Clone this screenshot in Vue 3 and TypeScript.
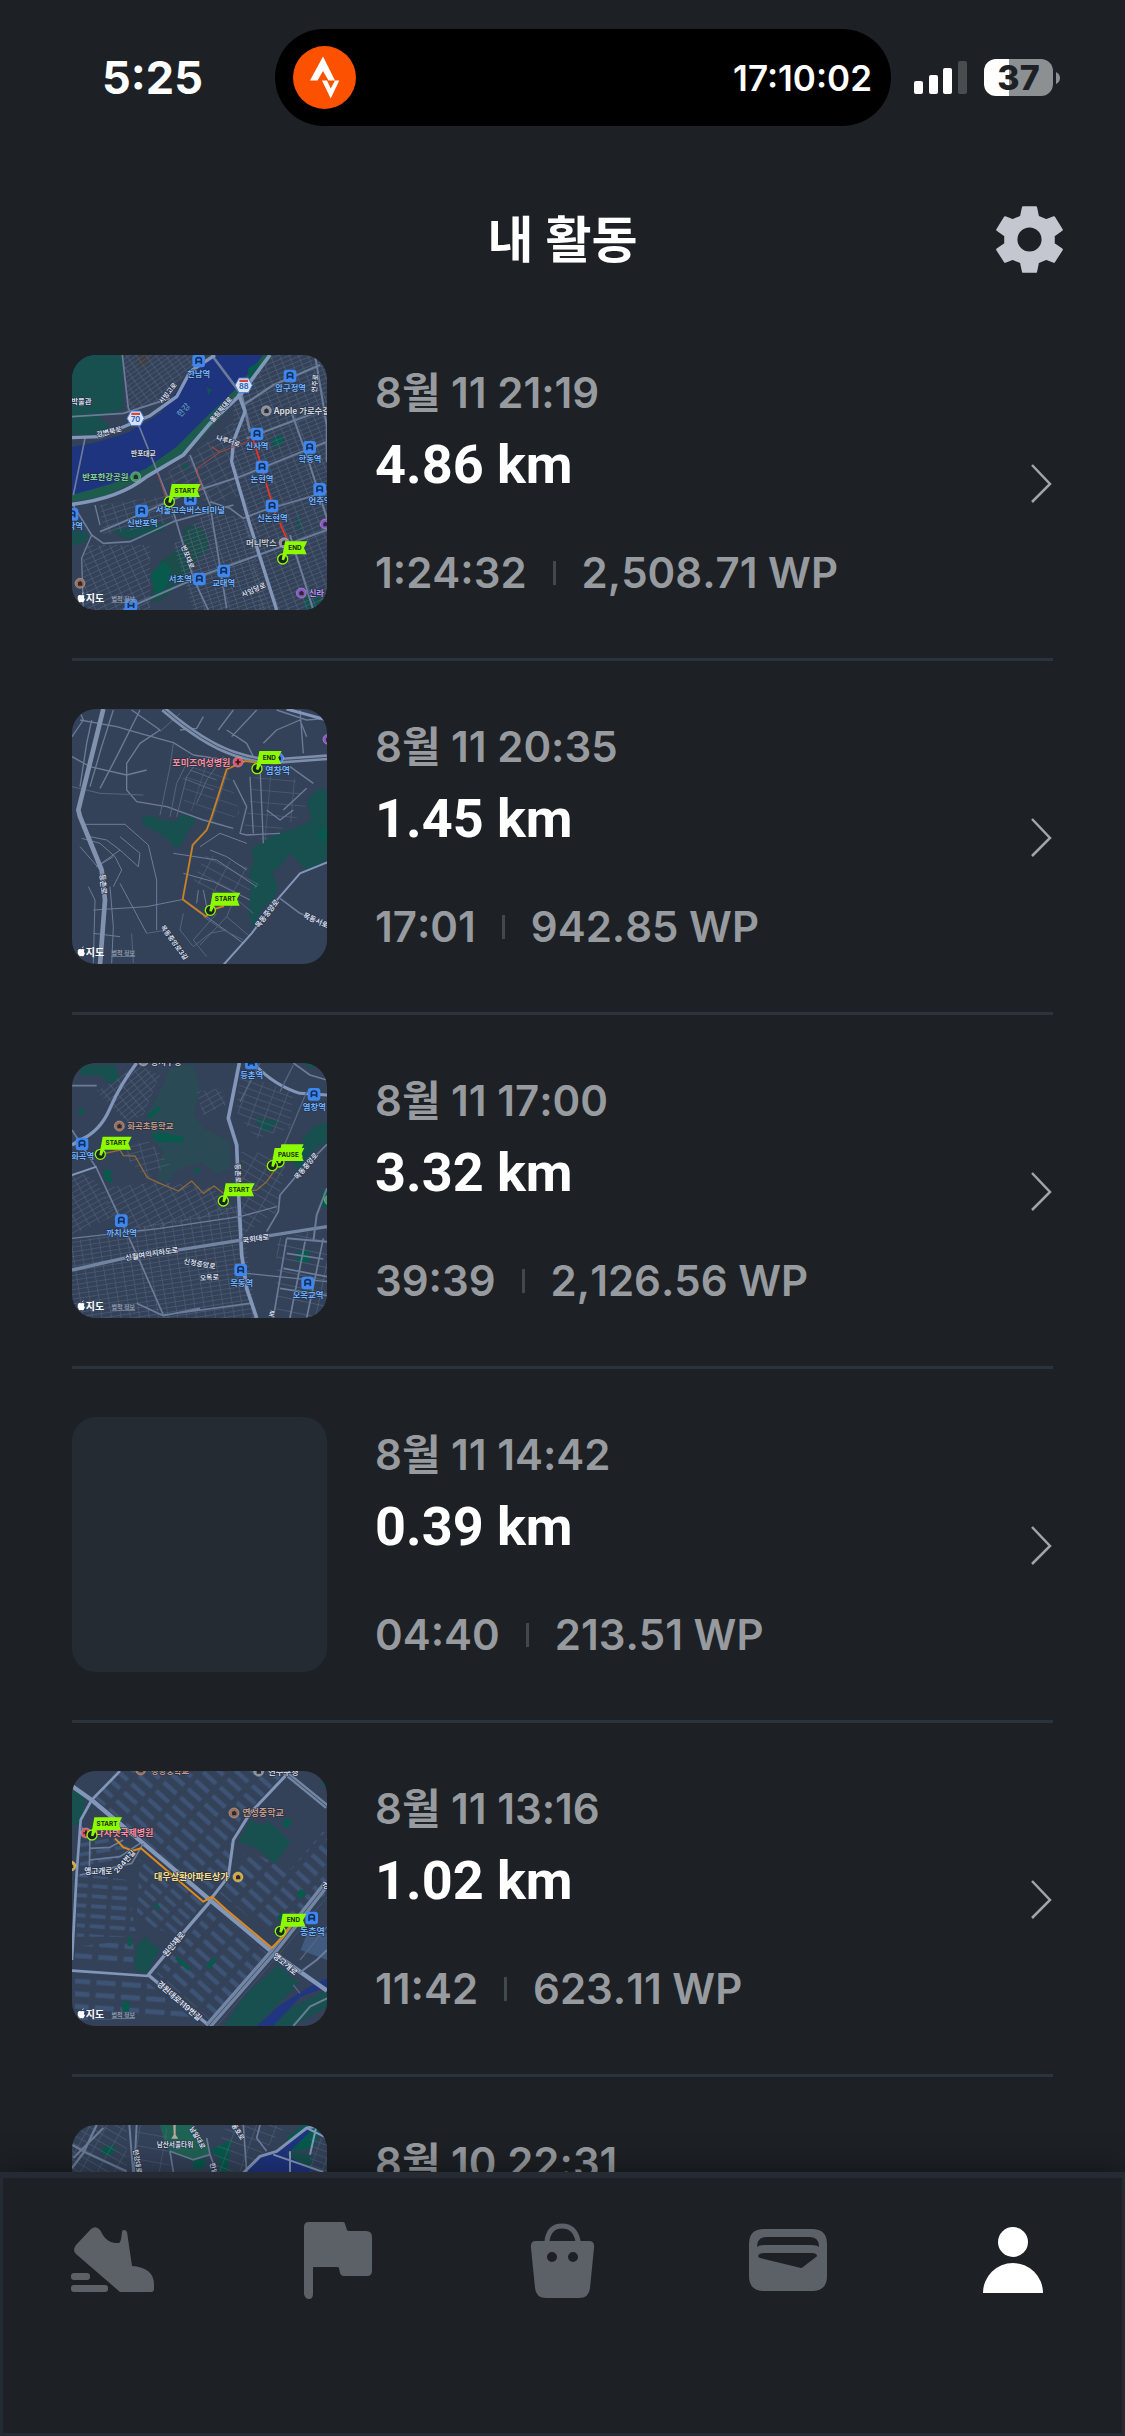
<script setup lang="ts">
type Road = [d: string, width: number, color?: string]
type Label = { x: number; y: number; t: string; c?: string; s?: number; r?: number }
type Hatch = { d: string; a: number; step: number; o?: number; block?: boolean }
type Poi = { x: number; y: number; k: 'metro' | 'blue' | 'brown' | 'gray' | 'red' | 'gold' | 'green' | 'purple' }
type Flag = { x: number; y: number; t: string; w: number }

interface MapArt {
  top: number
  areas: [d: string, fill: string][]
  hatches: Hatch[]
  roads: Road[]
  routes: Road[]
  pois: Poi[]
  shields: { x: number; y: number; t: string }[]
  labels: Label[]
  flags: Flag[]
}

interface Activity {
  date: string
  distance?: string
  duration?: string
  points?: string
  map?: MapArt
}

const PARK = '#17504f'
const PARK2 = '#075a4c'
const RIVER = '#1f347f'
const BLUE = '#6eb1ff'
const MAIN = '#8296b9'
const ROAD = '#6b7c98'
const THIN = '#54657f'
const ROSE = '#ff8d9b'
const CLAY = '#c79a86'

const seochoMap: MapArt = {
  top: 30,
  areas: [
    ['M36 30H187L190 190 150 210 36 208Z', PARK],
    ['M225 30H270L265 55 240 68Z', '#3d3d44'],
    ['M36 305 110 292 205 262 300 205 370 110 430 62 455 30H610L520 140 450 210 350 320 270 370 160 420 36 455Z', RIVER],
    ['M610 30H640L560 130 470 230 370 335 250 400 130 455 36 470V450L160 415 260 370 350 305 440 215 530 130Z', '#1d5b4d'],
    ['M36 200 110 210 150 245 130 270 36 268Z', PARK],
    ['M370 555Q410 525 440 570 455 620 425 628L375 700 340 735 300 770H270L285 700 300 650 335 625 370 610Z', '#1c4d4a'],
    ['M270 690 310 650 335 670 318 730 290 750Z', PARK2],
    ['M36 555 80 560 90 585 50 600H36Z', PARK],
    ['M635 285 665 268 673 290 645 308Z', PARK2],
    ['M710 515 722 507 724 560 712 550Z', PARK],
    ['M730 740 760 730 800 760V795H735Z', PARK],
    ['M155 555 240 545 330 530 300 560 200 585Z', PARK],
    ['M565 70 600 48 590 90 565 98ZM440 125 455 135 445 150ZM365 365 380 355 382 375Z', PARK2],
  ],
  hatches: [
    { d: 'M190 30H430L300 170 200 200Z', a: -35, step: 12 },
    { d: 'M520 180 640 30H801V795H600L520 340Z', a: -22, step: 13 },
    { d: 'M300 400 520 230 540 450 460 480Z', a: -28, step: 18 },
    { d: 'M120 480 330 450 350 530 130 570Z', a: -18, step: 16 },
    { d: 'M440 500 560 520 620 795H400L340 600Z', a: -18, step: 12 },
    { d: 'M70 600 270 600 270 795H70Z', a: -25, step: 15 },
  ],
  roads: [
    ['M187 30 205 190 240 250 300 400 340 500 400 700 445 795', 5, ROAD],
    ['M75 280 40 450M36 475 95 570 130 595 210 590 340 530 520 480', 5, ROAD],
    ['M36 215 190 205 330 160', 5, ROAD],
    ['M455 30 545 150 570 260', 8, ROAD],
    ['M390 330 450 480 500 790', 5, ROAD],
    ['M120 560 180 535 370 450 540 395 801 290', 6, ROAD],
    ['M450 470 510 490 550 520 600 500 801 440', 5, ROAD],
    ['M190 795 430 690 801 555', 6, ROAD],
    ['M550 180 640 120 780 60', 7, ROAD],
    ['M560 280 801 190', 6, ROAD],
    ['M690 190 740 330 801 520M690 570 760 795', 6, ROAD],
    ['M95 570 65 640 70 795M105 480 120 540', 4, ROAD],
    ['M36 278 120 275 270 212 350 155 390 80 465 30', 10],
    ['M36 478Q180 460 260 395L370 330 450 235 545 145 630 30', 11],
    ['M535 145 555 200 520 290 515 350 570 540 620 700 650 795', 10],
    ['M765 30 800 240V350', 6, ROAD],
  ],
  routes: [
    ['M295 390 318 460 425 432 410 370 480 322 455 305 480 322 560 290 578 268', 3, '#a9463f'],
    ['M578 280 600 350 640 490 682 585', 5, '#f8301c'],
  ],
  pois: [
    { x: 416, y: 48, k: 'metro' }, { x: 690, y: 93, k: 'metro' }, { x: 591, y: 267, k: 'metro' },
    { x: 749, y: 307, k: 'metro' }, { x: 606, y: 366, k: 'metro' }, { x: 779, y: 433, k: 'metro' },
    { x: 636, y: 483, k: 'metro' }, { x: 245, y: 498, k: 'metro' }, { x: 391, y: 462, k: 'metro' },
    { x: 36, y: 508, k: 'metro' }, { x: 418, y: 702, k: 'metro' }, { x: 491, y: 678, k: 'metro' },
    { x: 213, y: 780, k: 'metro' }, { x: 619, y: 197, k: 'gray' }, { x: 227, y: 395, k: 'green' },
    { x: 672, y: 593, k: 'gray' }, { x: 60, y: 715, k: 'brown' }, { x: 724, y: 744, k: 'purple' },
    { x: 796, y: 537, k: 'purple' },
  ],
  shields: [{ x: 227, y: 220, t: '70' }, { x: 551, y: 121, t: '88' }],
  labels: [
    { x: 416, y: 86, t: '한남역', c: BLUE }, { x: 692, y: 130, t: '압구정역', c: BLUE },
    { x: 591, y: 303, t: '신사역', c: BLUE }, { x: 750, y: 343, t: '학동역', c: BLUE },
    { x: 606, y: 402, t: '논현역', c: BLUE }, { x: 780, y: 468, t: '언주역', c: BLUE },
    { x: 637, y: 519, t: '신논현역', c: BLUE }, { x: 247, y: 534, t: '신반포역', c: BLUE },
    { x: 391, y: 496, t: '서울고속버스터미널', c: BLUE }, { x: 46, y: 543, t: '작역', c: BLUE },
    { x: 361, y: 703, t: '서초역', c: BLUE }, { x: 491, y: 713, t: '교대역', c: BLUE },
    { x: 370, y: 195, t: '한강', c: '#4c8be0', r: -50 }, { x: 725, y: 198, t: 'Apple 가로수길', c: '#d4d6dc' },
    { x: 136, y: 395, t: '반포한강공원', c: '#7fd0a0' }, { x: 250, y: 324, t: '반포대교', s: 20 },
    { x: 64, y: 167, t: '박물관', s: 22 }, { x: 604, y: 594, t: '머니박스', c: '#c9ccd4' },
    { x: 769, y: 744, t: '신라', c: '#c78df0' }, { x: 147, y: 259, t: '강변북로', r: -14, s: 21 },
    { x: 322, y: 143, t: '서빙고로', r: -52, s: 20 }, { x: 482, y: 192, t: '올림픽대로', r: -50, s: 20 },
    { x: 505, y: 286, t: '나루터로', r: 18, s: 20 }, { x: 385, y: 635, t: '반포대로', r: 68, s: 20 },
    { x: 580, y: 733, t: '사임당로', r: -24, s: 21 }, { x: 763, y: 115, t: '언주로', r: -85, s: 20 },
  ],
  flags: [{ x: 328, y: 470, t: 'START', w: 92 }, { x: 668, y: 642, t: 'END', w: 72 }],
}

const yeomchangMap: MapArt = {
  top: 27,
  areas: [
    ['M245 352 262 345 310 360 340 365 370 343 400 350 408 365 385 390 362 438 345 443 320 415 280 390 250 375Z', PARK],
    ['M780 262 801 275V480L770 500 735 508 710 480 690 460 670 490 635 520 655 560 640 600 610 620 580 682 565 640 572 580 570 510 580 490 575 445 650 400 700 388 755 360 740 300Z', PARK],
    ['M770 405 801 375V430Z', PARK2],
  ],
  hatches: [
    { d: 'M440 460 560 500 600 560 470 600 400 540Z', a: 28, step: 26, o: 0.8 },
    { d: 'M380 180 500 200 540 340 480 380 370 320Z', a: 18, step: 34, o: 0.7 },
    { d: 'M590 190 690 200 740 330 620 420 550 400Z', a: 5, step: 36, o: 0.8 },
  ],
  roads: [
    ['M55 25 70 60 36 110M60 60 170 80 240 100 340 128 400 165 500 180M95 60 80 130 60 260', 4, ROAD],
    ['M160 30 125 140 90 260M240 30 170 170 120 265M36 170 90 200 200 225 260 210M215 30 300 90 240 130 200 190 200 270 230 305 320 320 430 360 520 385', 4, ROAD],
    ['M36 260 120 280 250 285M300 95 360 40M340 130 330 200 300 345M390 170 350 250 330 350M415 180 380 230 350 350M390 210 470 240M370 235 460 270M410 310 440 240 490 170', 3, THIN],
    ['M475 90 520 30M430 50 410 85 360 90M500 90 560 130 590 190M515 110 590 30M610 130 650 90 720 60 740 110M720 30 730 160M650 30 740 60 801 55M570 230 580 400M600 200 610 430M520 240 560 320 540 400 560 405 660 400M620 330 660 360 700 330M690 200 760 250M670 330 740 265', 4, ROAD],
    ['M75 373H195L265 435 290 540V690M65 415 120 430 165 470 185 510 160 560M90 410 140 420 180 450 235 500 240 460 180 410M60 440 130 520M180 450 110 500 160 470', 3, ROAD],
    ['M100 630 260 620 370 598 440 650 550 730M85 560 105 600 100 790M150 560 160 680 155 790M180 550 260 700M100 700 180 710M340 460 470 480 590 560M370 520 460 545 570 600M415 570 410 610M430 570 440 620M420 440 480 400 560 430M450 450 500 470 560 510', 3, ROAD],
    ['M370 640 360 690 400 740 450 700 500 690M470 640 400 720 440 770M500 650 420 735M520 590 580 640M215 700 220 790M260 700 320 690M530 580 500 650 570 710M430 650 490 690 550 720', 3, THIN],
    ['M801 487 720 520 655 595 575 700 490 795', 6],
    ['M660 595 720 640 801 675', 5, ROAD],
    ['M130 27 55 330 60 350 125 510 135 600 120 795', 14, '#8092ad'],
    ['M310 27Q430 130 520 160T660 182L801 172', 18, '#7c8eaa'],
    ['M310 27Q430 130 520 160T660 182L801 172', 3, '#3f4f68'],
    ['M680 27 801 60', 9],
  ],
  routes: [
    ['M590 188 555 183 500 208 455 350 440 390 398 435 368 598 438 650 455 630 492 618', 6, '#a9772c'],
    ['M590 188 555 183 500 208 455 350 440 390 398 435 368 598 438 650 455 630 492 618', 2, '#e58a2a'],
  ],
  pois: [{ x: 534, y: 186, k: 'red' }, { x: 656, y: 174, k: 'blue' }, { x: 804, y: 118, k: 'purple' }],
  shields: [],
  labels: [
    { x: 424, y: 188, t: '포미즈여성병원', c: ROSE, s: 27 }, { x: 653, y: 213, t: '염창역', c: BLUE, s: 27 },
    { x: 131, y: 552, t: '등촌로', r: 84, s: 22 }, { x: 620, y: 640, t: '목동중앙로', r: -52, s: 22 },
    { x: 768, y: 660, t: '목동서로', r: 24, s: 22 }, { x: 344, y: 726, t: '목동중앙로3길', r: 54, s: 20 },
  ],
  flags: [{ x: 591, y: 206, t: 'END', w: 72 }, { x: 451, y: 631, t: 'START', w: 88 }],
}

const hwagokMap: MapArt = {
  top: 24,
  areas: [
    ['M330 40 400 27 420 100 400 180 430 220 510 260 512 340 470 355 420 320 350 345 320 385 290 370 310 290 280 250 260 180 300 110Z', '#2a4b56'],
    ['M60 30H165L180 75 150 85 120 62 60 60Z', PARK],
    ['M258 185 296 152 300 168 270 190ZM272 240 300 232 372 245 368 262 290 260Z', PARK2],
    ['M585 190 655 196 640 215 622 235 600 218Z', PARK],
    ['M801 200V262L770 280 740 310 715 350 700 330 735 240 760 215Z', PARK],
    ['M712 588 748 586V622H712ZM400 347 412 337 420 347 410 357ZM132 345H154V388L132 370ZM58 158 74 164 66 180 56 172ZM730 24 760 28 758 40Z', PARK2],
    ['M785 408H801V455H785Z', PARK2],
  ],
  hatches: [
    { d: 'M110 110 230 30 300 60 250 180 200 200Z', a: -40, step: 14 },
    { d: 'M410 110 480 100 500 150 430 180Z', a: -30, step: 16 },
    { d: 'M540 60 700 110 690 220 590 250 530 170Z', a: 20, step: 20 },
    { d: 'M36 560 540 450 590 790H36Z', a: -9, step: 14 },
    { d: 'M120 400 300 380 460 400 530 470 180 540Z', a: -28, step: 17 },
    { d: 'M545 290 680 300 650 470 545 540Z', a: 30, step: 22 },
    { d: 'M36 340 110 380 170 480 36 540Z', a: -30, step: 15 },
    { d: 'M650 550 801 520V789H650Z', a: 12, step: 38, o: 0.9 },
    { d: 'M160 270 270 260 330 330 260 370 200 310Z', a: -15, step: 20 },
  ],
  roads: [
    ['M36 92H110M36 225 110 340 175 480 240 620 310 780', 5, ROAD],
    ['M230 24Q180 90 150 160T60 255L36 270', 10],
    ['M36 360 110 335', 6],
    ['M310 780 570 745M230 745 310 782 420 760', 5, ROAD],
    ['M538 24 505 190 530 270 535 400 545 600 560 700 590 789', 11],
    ['M580 24Q640 90 720 115L801 120', 9],
    ['M700 24 750 60 801 75', 5, ROAD],
    ['M36 550 300 520 540 485 650 455M560 655 801 680', 4, ROAD],
    ['M36 645 190 610 400 578 590 548 801 515', 10, '#7184a1'],
    ['M801 268 720 350 660 420 655 470 620 530', 5, ROAD],
    ['M680 550 640 789M735 560 690 789M790 550 740 789M670 640 801 665M660 700 801 722M680 595 790 612', 5, ROAD],
    ['M801 400 770 480 760 560M680 550 801 560', 6, ROAD],
    ['M600 24 540 140M660 110 700 30M740 110 690 230 660 300', 4, THIN],
  ],
  routes: [['M122 298 180 285 190 302 225 303 262 368 300 385 355 408 395 378 430 415 462 393 490 415 590 405 620 380 655 330', 4, '#8f6a35']],
  pois: [
    { x: 574, y: 24, k: 'metro' }, { x: 762, y: 118, k: 'metro' }, { x: 66, y: 267, k: 'metro' },
    { x: 184, y: 497, k: 'metro' }, { x: 542, y: 645, k: 'metro' }, { x: 743, y: 684, k: 'metro' },
    { x: 178, y: 213, k: 'brown' }, { x: 250, y: 18, k: 'gray' }, { x: 808, y: 435, k: 'green' },
  ],
  shields: [],
  labels: [
    { x: 575, y: 60, t: '등촌역', c: BLUE }, { x: 763, y: 155, t: '염창역', c: BLUE },
    { x: 68, y: 304, t: '화곡역', c: BLUE }, { x: 185, y: 533, t: '까치산역', c: BLUE },
    { x: 545, y: 683, t: '목동역', c: BLUE }, { x: 744, y: 720, t: '오목교역', c: BLUE },
    { x: 271, y: 214, t: '화곡초등학교', c: CLAY }, { x: 318, y: 22, t: '등서구청', c: '#c9ccd4' },
    { x: 535, y: 355, t: '등촌로', r: 88, s: 21 }, { x: 737, y: 332, t: '목동중앙로', r: -50, s: 21 },
    { x: 275, y: 595, t: '신월여의지하도로', r: -9, s: 22 }, { x: 587, y: 550, t: '국회대로', r: -8, s: 22 },
    { x: 419, y: 625, t: '신정중앙로', r: 10, s: 21 }, { x: 448, y: 666, t: '오목로', r: -4, s: 21 },
    { x: 636, y: 775, t: '로', r: 10, s: 21 },
  ],
  flags: [
    { x: 121, y: 298, t: 'START', w: 92 }, { x: 490, y: 438, t: 'START', w: 92 },
    { x: 657, y: 321, t: '', w: 72 }, { x: 637, y: 332, t: 'PAUSE', w: 94 },
  ],
}

const dongchunMap: MapArt = {
  top: 33,
  areas: [
    ['M36 90 75 110 72 160 55 195H36Z', PARK],
    ['M745 510 801 520V600L722 570Z', '#405a80'],
  ],
  hatches: [
    { d: 'M190 33H680L540 180 500 350 440 400 250 240 100 110Z', a: 42, step: 34, block: true },
    { d: 'M560 270 690 330 801 200V400L650 540 480 400Z', a: 42, step: 34, block: true },
    { d: 'M240 290 440 430 350 530 230 480Z', a: 42, step: 28, block: true },
    { d: 'M50 340 200 360 230 530 50 530Z', a: 4, step: 30, block: true },
    { d: 'M45 560 220 540 220 620 45 615ZM45 655 260 665 400 780H45Z', a: 4, step: 38, block: true },
    { d: 'M460 440 620 580 450 780 290 640Z', a: 42, step: 34, block: true },
    { d: 'M60 200 170 240 220 270 150 310 60 320Z', a: -10, step: 28, block: true },
  ],
  roads: [
    ['M570 180 605 195 625 182 692 245 645 312 590 265 535 245Z', 0],
    ['M95 120 180 33M95 120 62 180 50 340 36 600', 8],
    ['M36 78 95 120 250 250 450 420 635 575 801 692', 13],
    ['M450 425 360 530 265 645 445 795', 10],
    ['M36 632 265 648', 8],
    ['M450 420 505 350 520 240 570 160 690 33', 9],
    ['M670 33 801 140', 16, '#7285a2'],
    ['M670 33 801 140', 3, '#3f4f68'],
    ['M445 798 640 575 801 370', 22, '#7285a2'],
    ['M445 798 640 575 801 370M470 798 660 580 801 410', 3, '#42526c'],
    ['M716 640 770 600 801 570M700 798 750 740 801 715', 6, ROAD],
    ['M62 200 90 230 88 330M90 265 150 262 190 240M88 300 180 290 240 250M250 250 215 310 60 345', 5, ROAD],
    ['M801 500 720 600M700 675 720 700', 4, THIN],
  ],
  routes: [['M165 235 190 262 218 272 243 265 430 425 456 410 500 450 635 563 670 530 690 500', 6, '#dd8a1c']],
  pois: [
    { x: 242, y: 30, k: 'brown' }, { x: 596, y: 34, k: 'gray' }, { x: 522, y: 159, k: 'brown' },
    { x: 78, y: 219, k: 'red' }, { x: 534, y: 351, k: 'gold' }, { x: 33, y: 318, k: 'gold' },
    { x: 755, y: 474, k: 'metro' },
  ],
  shields: [],
  labels: [
    { x: 330, y: 33, t: '청량중학교', c: CLAY }, { x: 670, y: 37, t: '연수구청', c: '#c9ccd4' },
    { x: 609, y: 160, t: '연성중학교', c: CLAY, s: 27 }, { x: 193, y: 220, t: '나사렛국제병원', c: ROSE, s: 27 },
    { x: 394, y: 352, t: '대우삼환아파트상가', c: '#ffe08a', s: 27 }, { x: 757, y: 516, t: '동춘역', c: BLUE, s: 27 },
    { x: 115, y: 334, t: '앵고개로', s: 23 }, { x: 193, y: 304, t: '264번길', s: 22, r: -48 },
    { x: 341, y: 552, t: '원인재로', r: -50, s: 24 }, { x: 676, y: 612, t: '앵고개로', r: 40, s: 24 },
    { x: 358, y: 722, t: '경원대로119번길', r: 41, s: 24 }, { x: 797, y: 376, t: '경', s: 22 },
  ],
  flags: [{ x: 96, y: 225, t: 'START', w: 88 }, { x: 661, y: 514, t: 'END', w: 76 }],
}

// Parks and the stream sit over the building blocks on this map.
const dongchunGreens: [d: string, fill: string][] = [
  ['M570 180 605 195 625 182 692 245 645 312 590 265 535 245Z', PARK],
  ['M255 530 300 570 260 640 222 630 228 560Z', PARK],
  ['M680 175 697 187 680 205 665 192ZM722 386 740 402 722 418 708 404ZM288 430 300 440 292 450 282 440ZM203 533H215V558H203ZM187 725H208V755H187ZM345 597 355 590 392 625 385 633ZM462 590 472 598 448 628 438 620ZM650 470 668 455 680 480 665 490ZM783 70 801 62V85Z', PARK2],
  ['M655 615 716 668 590 798H490L560 700Z', PARK],
  ['M801 690V740L700 798H620L700 740Z', PARK],
  ['M801 655V680L720 712 640 798H590L660 735 740 685Z', '#203681'],
]
dongchunMap.roads.shift()

const namsanMap: MapArt = {
  top: 21,
  areas: [
    ['M300 21H400L440 80 450 105 400 130 370 110 330 100 310 60Z', '#1f6355'],
    ['M450 95 515 65 500 170H480L475 120ZM400 130 440 120 430 150 400 152ZM125 90 160 80 165 100 145 115 125 105Z', PARK2],
    ['M680 60 730 21H790L760 90 700 100Z', PARK2],
    ['M555 162 610 110 660 100 740 30 760 30 680 110 770 165V200H555Z', RIVER],
    ['M680 100 755 110V155L690 115Z', PARK],
  ],
  hatches: [
    { d: 'M36 21H200V170H36Z', a: 30, step: 22 },
    { d: 'M500 21H680L560 160H440Z', a: 20, step: 28 },
    { d: 'M750 60H801V162H750Z', a: 20, step: 18 },
    { d: 'M230 21H320L330 162H230Z', a: 10, step: 40 },
  ],
  roads: [
    ['M110 21 70 105 36 150M36 80 80 105 200 160', 7, ROAD],
    ['M208 21 220 170M230 21 222 170M130 30 40 120', 6, ROAD],
    ['M340 162 330 100 400 125 450 110 440 60M450 110 470 162M550 21 560 162M600 21 590 60 620 100', 5, ROAD],
    ['M545 170 600 115 650 100 740 30 770 25', 9],
    ['M640 110 790 162M740 30 801 60M690 100V162M770 21 750 110', 6],
  ],
  routes: [],
  pois: [],
  shields: [],
  labels: [
    { x: 345, y: 77, t: '남산서울타워', s: 20 }, { x: 414, y: 58, t: '남일대로', r: 60, s: 20 },
    { x: 536, y: 40, t: '동호로', r: 58, s: 20 }, { x: 234, y: 130, t: '한강대로', r: 80, s: 20 },
    { x: 463, y: 152, t: '한남', r: 75, s: 20 },
  ],
  flags: [],
}

const activities: Activity[] = [
  { date: '8월 11 21:19', distance: '4.86 km', duration: '1:24:32', points: '2,508.71 WP', map: seochoMap },
  { date: '8월 11 20:35', distance: '1.45 km', duration: '17:01', points: '942.85 WP', map: yeomchangMap },
  { date: '8월 11 17:00', distance: '3.32 km', duration: '39:39', points: '2,126.56 WP', map: hwagokMap },
  { date: '8월 11 14:42', distance: '0.39 km', duration: '04:40', points: '213.51 WP' },
  { date: '8월 11 13:16', distance: '1.02 km', duration: '11:42', points: '623.11 WP', map: dongchunMap },
  { date: '8월 10 22:31', map: namsanMap },
]

const poiColors: Record<Poi['k'], string> = {
  metro: '#3b82f0', blue: '#3b82f0', brown: '#9a6f5c', gray: '#8b909a',
  red: '#d9566b', gold: '#d6ab3c', green: '#3f9a63', purple: '#8a56c8',
}
</script>

<template>
  <div class="app">
    <div class="status">
      <time class="clock">5:25</time>
      <div class="island">
        <svg class="strava" viewBox="0 0 63 63" aria-hidden="true">
          <circle cx="31.5" cy="31.5" r="31.5" fill="#fc5200" />
          <path d="M30 10.5 17 34.5H24.500L30 25 35.500 34.500H42ZM29 34.500 37.700 52.500 46.300 34.500H42L37.700 42.500 34 34.500Z" fill="#fff" />
        </svg>
        <span class="timer">17:10:02</span>
      </div>
      <div class="signals">
        <svg class="bars" viewBox="0 0 53 33" aria-hidden="true">
          <rect x="0" y="20" width="9" height="13" rx="2" fill="#fff" />
          <rect x="15" y="14" width="9" height="19" rx="2" fill="#fff" />
          <rect x="29" y="7" width="9" height="26" rx="2" fill="#fff" />
          <rect x="44" y="0" width="9" height="33" rx="2" fill="#494d50" />
        </svg>
        <div class="battery">37</div>
        <svg class="nub" viewBox="0 0 4 12" aria-hidden="true"><path d="M0 0Q4 2 4 6T0 12Z" fill="#8d9092" /></svg>
      </div>
    </div>

    <header class="header">
      <h1>내 활동</h1>
      <button class="settings" type="button" aria-label="설정">
        <svg viewBox="347 560 200 200" aria-hidden="true">
          <path
            fill-rule="evenodd"
            d="M428 564H466L472 592 497 603 520 594 543 631 519 648V673L543 690 520 726 497 717 472 728 466 756H428L422 728 397 717 374 726 351 690 375 673V648L351 631 374 594 397 603 422 592ZM447 624A36 36 0 1 0 447 696A36 36 0 1 0 447 624Z"
            fill="#c4c7cf"
          />
          <path
            d="M428 564H466L472 592 497 603 520 594 543 631 519 648V673L543 690 520 726 497 717 472 728 466 756H428L422 728 397 717 374 726 351 690 375 673V648L351 631 374 594 397 603 422 592Z"
            fill="none" stroke="#c4c7cf" stroke-width="7" stroke-linejoin="round"
          />
        </svg>
      </button>
    </header>

    <ul class="list">
      <li v-for="(a, i) in activities" :key="i">
        <a class="row" href="#">
          <div class="thumb">
            <svg v-if="a.map" :viewBox="`36 ${a.map.top} 765 765`" aria-hidden="true">
              <defs>
                <pattern
                  v-for="(h, n) in a.map.hatches" :id="`hatch-${i}-${n}`" :key="n"
                  :width="h.step * 2" :height="h.step" patternUnits="userSpaceOnUse"
                  :patternTransform="`rotate(${h.a})`"
                >
                  <rect v-if="h.block" x="4" y="5" :width="h.step * 1.5" :height="h.step * 0.38" fill="#405a80" />
                  <path v-else :d="`M0 1H${h.step * 2}M1 0V${h.step}`" stroke="#5b6c86" stroke-width="2" fill="none" />
                </pattern>
              </defs>
              <rect x="36" :y="a.map.top" width="765" height="765" fill="#344259" />
              <path v-for="(s, n) in a.map.areas" :key="`a${n}`" :d="s[0]" :fill="s[1]" />
              <path
                v-for="(h, n) in a.map.hatches" :key="`h${n}`" :d="h.d"
                :fill="`url(#hatch-${i}-${n})`" :opacity="h.o ?? 0.75"
              />
              <template v-if="a.map === dongchunMap">
                <path v-for="(s, n) in dongchunGreens" :key="`g${n}`" :d="s[0]" :fill="s[1]" />
              </template>
              <path
                v-for="(r, n) in a.map.roads" :key="`r${n}`" :d="r[0]" fill="none"
                :stroke="r[2] ?? MAIN" :stroke-width="r[1]" stroke-linejoin="round"
              />
              <path
                v-for="(r, n) in a.map.routes" :key="`t${n}`" :d="r[0]" fill="none"
                :stroke="r[2]" :stroke-width="r[1]" stroke-linejoin="round"
              />
              <g v-for="(s, n) in a.map.shields" :key="`s${n}`" :transform="`translate(${s.x} ${s.y})`">
                <path d="M-14 -22H14L26 0 14 22H-14L-26 0Z" fill="#d9e2f2" stroke="#3f7bd6" stroke-width="3" />
                <path d="M-13 -17H13V-10H-13Z" fill="#d4493f" />
                <text y="11" class="label" font-size="22" fill="#2d62b8">{{ s.t }}</text>
              </g>
              <g v-for="(p, n) in a.map.pois" :key="`p${n}`" :transform="`translate(${p.x} ${p.y})`">
                <template v-if="p.k === 'metro'">
                  <rect x="-19" y="-19" width="38" height="38" rx="9" fill="#3f86ee" />
                  <path d="M-8 9V-5Q-8 -10 0 -10T8 -5V9M-8 2H8" fill="none" stroke="#12305f" stroke-width="5" />
                </template>
                <template v-else>
                  <circle r="15" :fill="poiColors[p.k]" stroke="#e4dfe2" stroke-opacity="0.5" stroke-width="2" />
                  <path v-if="p.k === 'red'" d="M-8 0H8M0 -8V8" stroke="#2a1820" stroke-width="5" />
                  <path v-else d="M-6 7V-3L1 -7 7 -2V7Z" fill="#2a2a30" />
                </template>
              </g>
              <text
                v-for="(l, n) in a.map.labels" :key="`l${n}`" class="label outlined" dy="9"
                :transform="`translate(${l.x} ${l.y}) rotate(${l.r ?? 0})`"
                :font-size="l.s ?? 25" :fill="l.c ?? '#d7dfec'"
              >{{ l.t }}</text>
              <g v-for="(f, n) in a.map.flags" :key="`f${n}`" :transform="`translate(${f.x} ${f.y})`">
                <circle r="15" fill="#1c2226" stroke="#8dfb00" stroke-width="4" />
                <path :d="`M-3 2 7 -53H${f.w + 2}L${f.w - 8} -33 ${f.w} -14H12L4 4Z`" fill="#8dfb00" />
                <text class="label" :x="f.w / 2 + 1" y="-27" font-size="19" fill="#1c2a10">{{ f.t }}</text>
              </g>
              <template v-if="a.map !== namsanMap">
                <path
                  :transform="`translate(64 ${a.map.top + 730})`"
                  d="M2 -12Q3 -17 7 -18Q7 -13 2 -12ZM-7 -10Q-3 -11 0 -9 5 -12 10 -8 5 -2 11 3 7 13 3 12 0 10 -4 12 -8 12 -11 2 -12 -8 -7 -10Z"
                  fill="#fff"
                />
                <text class="label" x="105" :y="a.map.top + 740" font-size="30" fill="#fff">지도</text>
                <text class="label legal" x="190" :y="a.map.top + 738" font-size="18" fill="#8d97a8">법적 정보</text>
              </template>
              <path v-else d="M340 21H347V50L355 62H334L341 50Z" fill="#b5a99a" />
            </svg>
          </div>
          <div class="info">
            <span class="meta">{{ a.date }}</span>
            <strong class="distance">{{ a.distance }}</strong>
            <span class="meta stats">
              <span>{{ a.duration }}</span>
              <i class="sep"></i>
              <span>{{ a.points }}</span>
            </span>
          </div>
          <svg class="chevron" viewBox="0 0 22 40" aria-hidden="true">
            <path d="M1 2 19 21 1 39" fill="none" stroke="#a1a4a8" stroke-width="2.500" />
          </svg>
        </a>
      </li>
    </ul>

    <nav class="tabs">
      <button type="button" aria-label="운동">
        <svg width="84" height="66" viewBox="0 0 84 66">
          <path d="M20 2Q25 -2 29 3C33 11 38 16 45 16H48Q50 16 51 5 51 3 53 3T56 5L61 39C75 40 83 46 83 57V62Q83 65 80 65H49L5 27Q1 23 5 18Z" />
          <rect x="0" y="46" width="19" height="7" rx="3" />
          <rect x="0" y="58" width="37" height="7" rx="3" />
        </svg>
      </button>
      <button type="button" aria-label="챌린지">
        <svg width="68" height="77" viewBox="0 0 68 77">
          <path d="M5 0H39Q41 0 41 2L43 8Q43 9 45 9H62Q68 9 68 15V49Q68 54 63 54H39Q37 54 36 51L35 46Q35 45 33 45H9V72Q9 77 5 77T0 72V5Q0 0 5 0Z" />
        </svg>
      </button>
      <button type="button" aria-label="상점">
        <svg width="65" height="75" viewBox="0 0 65 75">
          <path d="M17 20V18Q19 3 32 3T48 18V20" fill="none" stroke="#5c6167" stroke-width="5" />
          <path fill-rule="evenodd" d="M6 18H59Q65 18 64 25L60 65Q59 75 49 75H16Q6 75 5 65L1 25Q0 18 6 18ZM22 29A5 5 0 1 0 22 39A5 5 0 1 0 22 29ZM43 29A5 5 0 1 0 43 39A5 5 0 1 0 43 29Z" />
        </svg>
      </button>
      <button type="button" aria-label="지갑">
        <svg width="78" height="62" viewBox="0 0 78 62">
          <path fill-rule="evenodd" d="M15 0H63Q78 0 78 15V47Q78 62 63 62H15Q0 62 0 47V15Q0 0 15 0ZM8 18Q10 16 16 16H62Q68 16 70 18 70 8 61 8H17Q8 8 8 18ZM9 27Q9 28 11 29L52 39Q53 39 54 38L67 28Q69 27 67 25 65 24 63 24H15Q10 24 9 27Z" />
        </svg>
      </button>
      <button class="active" type="button" aria-label="내 정보" aria-current="page">
        <svg width="60" height="66" viewBox="0 0 60 66">
          <circle cx="30" cy="15" r="15" />
          <path d="M0 66A30 30 0 0 1 60 66Z" />
        </svg>
      </button>
    </nav>
  </div>
</template>

<style>
body {
  background: #1d2125;
}
</style>

<style scoped>
* {
  box-sizing: border-box;
}

.app {
  display: flex;
  flex-direction: column;
  height: 100vh;
  background: #1d2125;
  color: #fff;
  font-family: Inter, "Noto Sans CJK KR", sans-serif;
}

svg {
  display: block;
}

button {
  padding: 0;
  border: 0;
  background: none;
}

.status {
  display: grid;
  flex: none;
  grid-template-columns: 275fr 616fr 234fr;
  align-items: center;
  height: 155px;
}

.clock {
  padding-left: 102px;
  font-size: 45px;
  font-weight: 700;
  line-height: 48px;
}

.island {
  display: flex;
  align-items: center;
  justify-content: space-between;
  height: 97px;
  padding: 0 19px 0 18px;
  border-radius: 49px;
  background: #000;
}

.strava {
  width: 63px;
  height: 63px;
}

.timer {
  font-size: 35px;
  font-weight: 600;
  line-height: 40px;
}

.signals {
  display: flex;
  align-items: center;
  padding-left: 23px;
}

.bars {
  width: 53px;
  height: 33px;
}

.battery {
  width: 69px;
  height: 37px;
  margin-left: 17px;
  border-radius: 12px;
  background: linear-gradient(90deg, #fff 36%, #8d9092 36%);
  color: #1d2125;
  font-size: 34px;
  font-weight: 800;
  line-height: 37px;
  text-align: center;
}

.nub {
  width: 4px;
  height: 12px;
  margin-left: 3px;
}

.header {
  display: grid;
  flex: none;
  grid-template-columns: 1fr auto 1fr;
  align-items: center;
  height: 169px;
  padding: 0 62px;
}

h1 {
  grid-column: 2;
  margin: 0;
  font-size: 50px;
  font-weight: 700;
  line-height: 72px;
}

.settings {
  justify-self: end;
}

.settings svg {
  width: 67px;
  height: 67px;
}

.list {
  flex: 1;
  min-height: 0;
  margin: 0;
  padding: 31px 72px 0;
  overflow: hidden;
  list-style: none;
}

li {
  padding-bottom: 48px;
  margin-bottom: 48px;
  border-bottom: 3px solid #2b333d;
}

.row {
  display: flex;
  align-items: center;
  gap: 48px;
  color: inherit;
  text-decoration: none;
}

.thumb {
  flex: none;
  width: 255px;
  height: 255px;
  overflow: hidden;
  border-radius: 24px;
  background: #252b33;
}

.label {
  font-family: Inter, "Noto Sans CJK KR", sans-serif;
  font-weight: 700;
  text-anchor: middle;
}

.outlined {
  paint-order: stroke;
  stroke: #1f2a3d;
  stroke-width: 3px;
}

.legal {
  text-decoration: underline;
}

.info {
  display: flex;
  flex: 1;
  flex-direction: column;
}

.meta {
  min-height: 52px;
  color: #979b9f;
  font-size: 42px;
  font-weight: 600;
  font-kerning: none;
  line-height: 52px;
}

.distance {
  min-height: 64px;
  margin: 14px 0 50px;
  font-family: Roboto, sans-serif;
  font-size: 54px;
  font-weight: 700;
  line-height: 64px;
}

.stats {
  display: flex;
  align-items: center;
  gap: 26px;
}

.sep {
  width: 3px;
  height: 24px;
  background: #43484d;
}

.chevron {
  width: 22px;
  height: 40px;
}

.tabs {
  position: relative;
  display: grid;
  flex: none;
  grid-template-columns: repeat(5, 1fr);
  height: 264px;
  padding-top: 40px;
  border-top: 6px solid #252a33;
  background: #1d2125;
  box-shadow:
    inset 3px 0 #252a33,
    inset -3px -3px #252a33,
    0 -4px 30px rgba(0, 0, 0, 0.35);
}

.tabs button {
  display: flex;
  align-items: center;
  justify-content: center;
  height: 84px;
}

.tabs svg {
  fill: #5c6167;
}

.tabs .active svg {
  fill: #fff;
}
</style>
